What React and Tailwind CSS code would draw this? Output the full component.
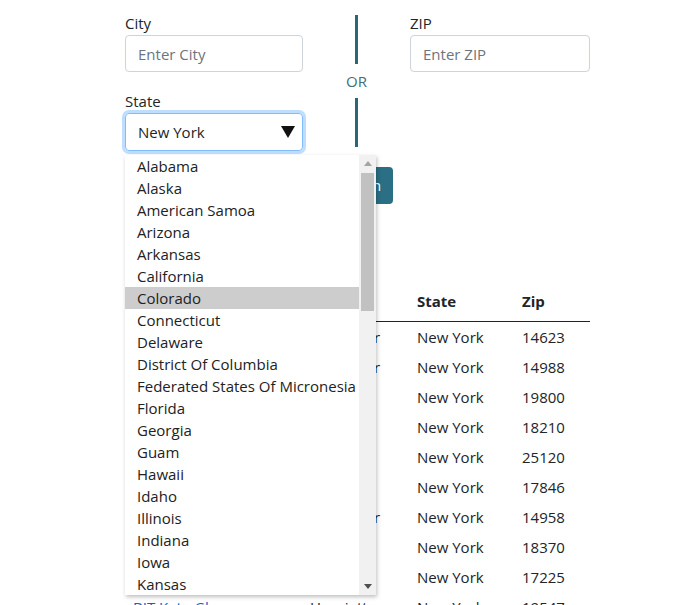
import React from "react";

const STATES = [
  "Alabama",
  "Alaska",
  "American Samoa",
  "Arizona",
  "Arkansas",
  "California",
  "Colorado",
  "Connecticut",
  "Delaware",
  "District Of Columbia",
  "Federated States Of Micronesia",
  "Florida",
  "Georgia",
  "Guam",
  "Hawaii",
  "Idaho",
  "Illinois",
  "Indiana",
  "Iowa",
  "Kansas",
];

const ROWS = [
  { name: "Ace Garden Club", city: "Rochester", zip: "14623" },
  { name: "Allegany Club", city: "Rochester", zip: "14988" },
  { name: "Bayside Gardens", city: "Albany", zip: "19800" },
  { name: "Beacon Society", city: "Elmira", zip: "18210" },
  { name: "Belle Garden", city: "Utica", zip: "25120" },
  { name: "Bergen Club", city: "Ithaca", zip: "17846" },
  { name: "Big Flats Club", city: "Rochester", zip: "14958" },
  { name: "Binghamton Garden", city: "Owego", zip: "18370" },
  { name: "Birch Hill Club", city: "Troy", zip: "17225" },
  { name: "BIT Kata Glen", city: "Henrietta", zip: "19547" },
];

export default function App() {
  return (
    <div className="relative min-h-[605px] bg-white font-['Open_Sans',sans-serif] text-[15px] text-[#212529]">
      <div className="ml-[125px] w-[465px] pt-[11px]">
        {/* search form */}
        <div className="grid grid-cols-[178px_107px_180px]">
          <div className="flex flex-col">
            <label className="leading-6">City</label>
            <input
              placeholder="Enter City"
              className="h-[37px] rounded border border-[#ced4da] px-3 text-[15px] placeholder:text-[#6c757d] outline-none"
            />
            <label className="mt-[17px] leading-6">State</label>
            <div className="flex h-[38px] items-center justify-between rounded border border-[#80bdff] pl-3 pr-[7px] shadow-[0_0_0_3px_rgba(0,123,255,0.25)]">
              <span>New York</span>
              <svg width="14" height="12" viewBox="0 0 14 12">
                <path d="M0 0 L14 0 L7 12 Z" fill="#111" />
              </svg>
            </div>
          </div>
          <div className="flex flex-col items-center pt-[4px]">
            <div className="h-[49px] w-[3px] bg-[#2b6777]" />
            <span className="my-[5px] leading-6 text-[#3f6f7c]">OR</span>
            <div className="h-[49px] w-[3px] bg-[#2b6777]" />
          </div>
          <div className="flex flex-col">
            <label className="leading-6">ZIP</label>
            <input
              placeholder="Enter ZIP"
              className="h-[37px] rounded border border-[#ced4da] px-3 text-[15px] placeholder:text-[#6c757d] outline-none"
            />
          </div>
        </div>

        <div className="mt-[16px] flex justify-center">
          <button className="h-[37px] rounded bg-[#2a6f84] px-3 text-white">Search</button>
        </div>

        {/* results */}
        <table className="mt-[77px] w-full table-fixed border-collapse text-left">
          <colgroup>
            <col className="w-[177px]" />
            <col className="w-[107px]" />
            <col className="w-[105px]" />
            <col />
          </colgroup>
          <thead>
            <tr className="border-b border-[#222]">
              <th className="px-2 py-2 font-bold leading-6">Name</th>
              <th className="px-2 py-2 font-bold leading-6">City</th>
              <th className="px-2 py-2 font-bold leading-6">State</th>
              <th className="px-2 py-2 font-bold leading-6">Zip</th>
            </tr>
          </thead>
          <tbody>
            {ROWS.map((row, idx) => (
              <tr key={idx}>
                <td className="whitespace-nowrap px-2 py-[3px] leading-6 text-[#0b62d6]">{row.name}</td>
                <td className="whitespace-nowrap px-2 py-[3px] leading-6">{row.city}</td>
                <td className="px-2 py-[3px] leading-6">New York</td>
                <td className="px-2 py-[3px] leading-6">{row.zip}</td>
              </tr>
            ))}
          </tbody>
        </table>
      </div>

      {/* open state list */}
      <div className="absolute left-[125px] top-[155px] flex h-[440px] w-[251px] bg-white shadow-[1px_2px_4px_rgba(0,0,0,0.25)]">
        <ul className="min-w-0 flex-1 overflow-hidden">
          {STATES.map((s) => (
            <li
              key={s}
              className={`h-[22px] whitespace-nowrap pl-3 leading-[22px] text-[#222] ${s === "Colorado" ? "bg-[#cdcdcd]" : ""}`}
            >
              {s}
            </li>
          ))}
        </ul>
        <div className="flex w-[17px] shrink-0 flex-col items-center bg-[#f1f1f1]">
          <div className="flex h-[17px] items-center justify-center">
            <svg width="8" height="5" viewBox="0 0 8 5">
              <path d="M0 5 L4 0 L8 5 Z" fill="#a3a3a3" />
            </svg>
          </div>
          <div className="mt-px h-[138px] w-[13px] bg-[#c1c1c1]" />
          <div className="flex-1" />
          <div className="flex h-[17px] items-center justify-center">
            <svg width="8" height="5" viewBox="0 0 8 5">
              <path d="M0 0 L8 0 L4 5 Z" fill="#505050" />
            </svg>
          </div>
        </div>
      </div>
    </div>
  );
}
